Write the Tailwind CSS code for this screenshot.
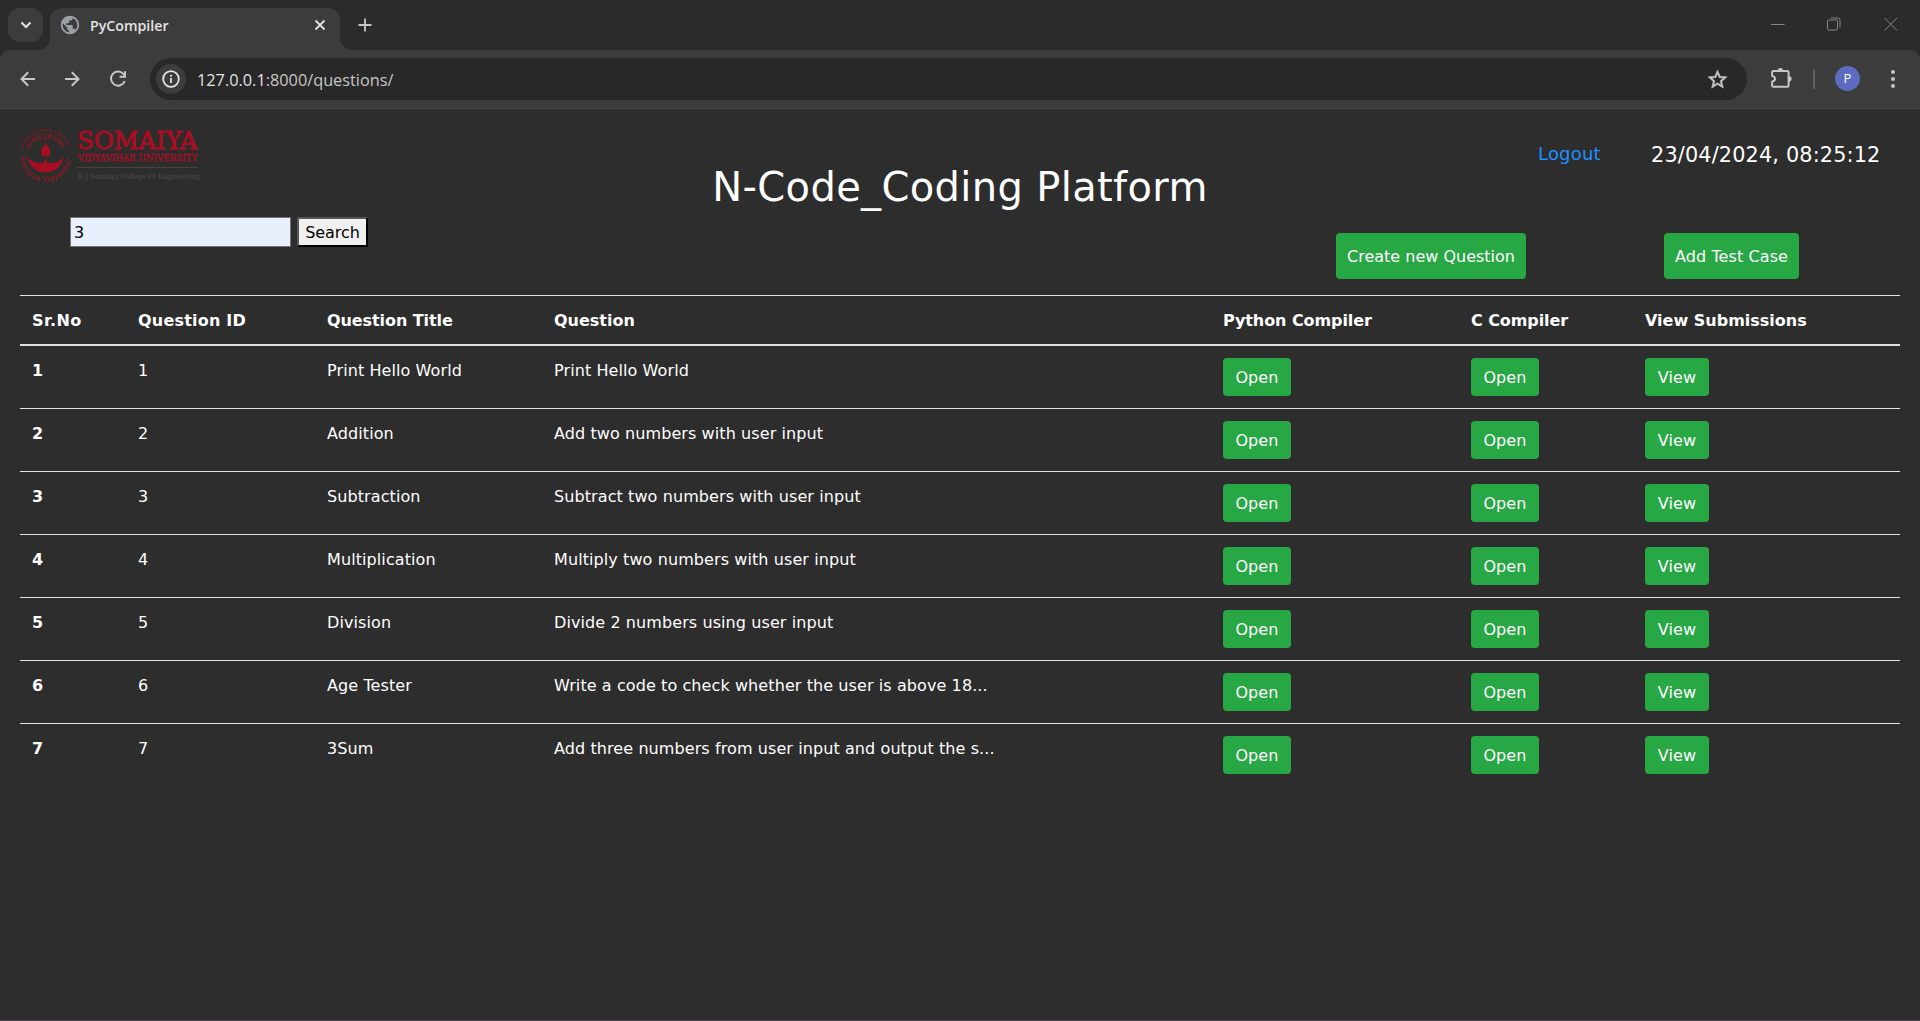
<!DOCTYPE html>
<html lang="en">
<head>
<meta charset="utf-8">
<title>PyCompiler</title>
<script src="https://cdn.jsdelivr.net/npm/@tailwindcss/browser@4"></script>
</head>
<body class="w-[1920px] h-[1021px] overflow-hidden bg-[#2d2d2d] flex flex-col text-white font-['DejaVu_Sans',sans-serif] text-base">

<!-- Tab strip -->
<div class="h-[50px] shrink-0 bg-[#2b2b2b] flex items-start font-['Open_Sans',sans-serif]">
  <button class="ml-2 mt-2 w-[35px] h-[34px] rounded-xl bg-[#3c3c3c] flex items-center justify-center">
    <svg class="w-3 h-3" viewBox="0 0 12 12" fill="none" stroke="#e3e3e3" stroke-width="2"><path d="M1.5 3.5 6 8l4.5-4.5"/></svg>
  </button>
  <div class="relative ml-[7px] mt-2 w-[290px] h-[42px] rounded-t-xl bg-[#3c3c3c] flex items-center pb-[1px]">
    <svg class="absolute -left-3 bottom-0 w-3 h-3" viewBox="0 0 12 12" fill="#3c3c3c"><path d="M12 0v12H0A12 12 0 0 0 12 0z"/></svg>
    <svg class="absolute -right-3 bottom-0 w-3 h-3" viewBox="0 0 12 12" fill="#3c3c3c"><path d="M0 0v12h12A12 12 0 0 1 0 0z"/></svg>
    <svg class="ml-[9px] mb-[7px] w-[22px] h-[22px]" viewBox="0 0 24 24" fill="#9aa0a6"><path d="M12 2C6.48 2 2 6.48 2 12s4.48 10 10 10 10-4.48 10-10S17.52 2 12 2zm-1 17.93c-3.95-.49-7-3.85-7-7.93 0-.62.08-1.21.21-1.79L9 15v1c0 1.1.9 2 2 2v1.93zm6.9-2.54c-.26-.81-1-1.39-1.9-1.39h-1v-3c0-.55-.45-1-1-1H8v-2h2c.55 0 1-.45 1-1V7h2c1.1 0 2-.9 2-2v-.41c2.93 1.19 5 4.06 5 7.41 0 2.08-.8 3.97-2.1 5.39z"/></svg>
    <span class="ml-[9px] mb-[6px] text-[14.2px] leading-5 font-semibold text-[#e3e3e3]">PyCompiler</span>
    <svg class="ml-auto mr-[14px] mb-[7px] w-3 h-3" viewBox="0 0 12 12" fill="none" stroke="#e3e3e3" stroke-width="1.8"><path d="m1.5 1.5 9 9m0-9-9 9"/></svg>
  </div>
  <svg class="ml-[18px] mt-[18px] w-[14px] h-[14px]" viewBox="0 0 14 14" fill="none" stroke="#c7c7c7" stroke-width="1.8"><path d="M7 .5v13M.5 7h13"/></svg>
  <div class="ml-auto mt-[17px] mr-[22px] flex items-center">
    <svg class="w-[14px] h-[14px]" viewBox="0 0 14 14" stroke="#858585"><path d="M0 7.5h13.5"/></svg>
    <svg class="ml-[42px] w-[14px] h-[14px]" viewBox="0 0 14 14" fill="none" stroke="#858585"><rect x=".5" y="3" width="10" height="10" rx="1"/><path d="M3.5 1h7.500a2 2 0 0 1 2 2v7.500"/></svg>
    <svg class="ml-[43px] w-[14px] h-[14px]" viewBox="0 0 14 14" stroke="#858585"><path d="m.5 1 12.500 12.500m0-12.500L.5 13.500"/></svg>
  </div>
</div>

<!-- Toolbar -->
<div class="h-[59px] shrink-0 bg-[#2b2b2b]">
  <div class="h-full rounded-t-[10px] bg-[#3c3c3c] border-b border-[#484848] flex items-start text-[#c7c7c7] font-['Open_Sans',sans-serif]">
    <svg class="ml-[20px] mt-[21px] w-[15px] h-4" viewBox="0 0 15 16" fill="none" stroke="currentColor" stroke-width="2"><path d="M15 8H1.500M8.200 1.200 1.500 8l6.700 6.800"/></svg>
    <svg class="ml-[30px] mt-[21px] w-[15px] h-4" viewBox="0 0 15 16" fill="none" stroke="currentColor" stroke-width="2"><path d="M0 8h13.500M6.800 1.200 13.500 8l-6.700 6.800"/></svg>
    <svg class="ml-[27px] mt-[18px] w-[22px] h-[22px]" viewBox="0 0 24 24" fill="none" stroke="currentColor" stroke-width="2.100"><path d="M19.300 14.300a7.700 7.700 0 1 1-1.500-7.900l1.600 1.800"/><path d="M19.700 3.600v6h-6"/></svg>
    <div class="ml-[21px] mt-2 w-[1597px] h-[42px] rounded-full bg-[#282828] flex items-center">
      <span class="ml-[6px] w-[30px] h-[30px] rounded-full bg-[#3c3c3c] flex items-center justify-center">
        <svg class="w-[18px] h-[18px]" viewBox="0 0 18 18" fill="none" stroke="#e3e3e3" stroke-width="1.8"><circle cx="9" cy="9" r="7.800"/><path d="M9 8v5M9 4.800v1.900"/></svg>
      </span>
      <span class="ml-[11px] pt-px text-[16.3px] leading-6"><span class="text-[#e3e3e3]">127.0.0.1</span>:8000/questions/</span>
      <svg class="ml-auto mr-[18px] w-[23px] h-[23px]" viewBox="0 0 24 24" fill="currentColor"><path d="m22 9.24-7.19-.62L12 2 9.19 8.63 2 9.24l5.46 4.73L5.82 21 12 17.27 18.18 21l-1.63-7.03zM12 15.4l-3.76 2.27 1-4.28-3.32-2.88 4.38-.38L12 6.1l1.71 4.04 4.38.38-3.32 2.88 1 4.28z" stroke="currentColor" stroke-width=".5"/></svg>
    </div>
    <svg class="ml-[24px] mt-[17px] w-[22px] h-[22px]" viewBox="0 0 22 22"><path d="M2.300 3.900h14a1.300 1.300 0 0 1 1.300 1.300v13.200a1.300 1.300 0 0 1-1.300 1.300H2.300a1.200 1.200 0 0 1-1.200-1.200v-3.700c1.800-.5 2.900-1.500 2.900-3s-1.100-2.600-2.900-3.100V5.100a1.200 1.200 0 0 1 1.200-1.200z" fill="none" stroke="currentColor" stroke-width="2"/><path d="M6.800 3.600a2.600 2.600 0 0 1 5.200 0zM17.800 9a2.800 2.800 0 0 1 0 5.600z" fill="currentColor"/></svg>
    <span class="ml-5 mt-[19px] w-[2px] h-5 bg-[#5e5e5e]"></span>
    <span class="ml-5 mt-4 w-[25px] h-[25px] rounded-full bg-[#5c6bc0] text-white flex items-center justify-center text-[13px] leading-none">P</span>
    <svg class="ml-[30px] mt-5 w-[6px] h-[18px]" viewBox="0 0 6 18" fill="currentColor"><circle cx="3" cy="2" r="2"/><circle cx="3" cy="9" r="2"/><circle cx="3" cy="16" r="2"/></svg>
  </div>
</div>

<!-- Page header -->
<header class="h-[186px] shrink-0 grid grid-cols-[640px_640px_640px]">
  <div class="pt-[11px]">
    <svg class="ml-[10px] w-[200px] h-[70px] overflow-visible" viewBox="0 0 200 70" fill="#a80d22" font-family="'DejaVu Serif',serif">
      <defs>
        <path id="ringTop" d="M12 28.500A24.500 24.500 0 0 1 59 28.500"/>
        <path id="ringInner" d="M19 30A17.500 17.500 0 0 1 52 30"/>
        <path id="ringBottom" d="M10 36A25.500 25.500 0 0 0 61 36"/>
      </defs>
      <text font-size="3.800" font-family="'DejaVu Sans',sans-serif"><textPath href="#ringTop" textLength="60">Knowledge Alone Liberates</textPath></text>
      <text font-size="6.500" font-family="'Noto Sans',sans-serif"><textPath href="#ringInner" textLength="40">ज्ञानादेव तु कैवल्यम्</textPath></text>
      <text font-size="7" font-family="'DejaVu Sans',sans-serif"><textPath href="#ringBottom" startOffset="1" textLength="76">Somaiya Vidyavihar</textPath></text>
      <path d="M17.500 37c4 5 10 7 15 6 1.600-.4 2.600-1.800 3-5 .4 3.200 1.400 4.600 3 5 5 1 11-1 15-6-1.500 9-8.500 15.500-18 15.500S19 46 17.500 37z"/>
      <path d="M35.800 21.500c.4 4.500 4.500 6.500 4.500 10.500 0 3-2 4.800-3.800 5.300L35.500 34l-1 3.300c-1.800-.5-3.500-2.300-3.500-5.300 0-4 4.600-6 4.800-10.500z"/>
      <text x="67.300" y="28.700" font-size="23.500" textLength="120" lengthAdjust="spacingAndGlyphs" stroke="#a80d22" stroke-width=".9">SOMAIYA</text>
      <text x="67.700" y="40.700" font-size="9.200" textLength="119.500" lengthAdjust="spacingAndGlyphs" stroke="#a80d22" stroke-width=".35">VIDYAVIHAR UNIVERSITY</text>
      <path d="M67.700 47h119.500v1H67.700z" fill="#444"/>
      <text x="67.700" y="59.300" font-size="7.500" font-weight="bold" fill="#434343" textLength="122" lengthAdjust="spacingAndGlyphs">K J Somaiya College Of Engineering</text>
    </svg>
    <form class="ml-[70px] mt-[27px] flex gap-[6px] text-black">
      <input class="w-[221px] h-[30px] bg-[#e8f0fe] border border-[#767676] pl-[3px] pt-px leading-6 outline-none" value="3">
      <button type="button" class="w-[71px] h-[30px] bg-[#f0f0f0] border-2 border-t-[#555] border-l-[#555] border-r-black border-b-black pt-px leading-[25px] tracking-[-0.05px] flex items-center justify-center">Search</button>
    </form>
  </div>
  <h1 class="pt-[54px] text-[40px] leading-[48px] tracking-[0.35px] text-center whitespace-nowrap">N-Code_Coding Platform</h1>
  <div class="pt-[31px]">
    <div class="flex items-start h-[30px]">
      <a class="ml-[258px] w-[113px] text-[18px] leading-[27px] tracking-[0.2px] text-[#1e90ff]">Logout</a>
      <span class="text-[20.8px] leading-[30px] tracking-[0.15px] whitespace-nowrap">23/04/2024, 08:25:12</span>
    </div>
    <div class="mt-[63px] flex">
      <button class="ml-[56px] w-[190px] h-[46px] pt-px rounded bg-[#28a745] whitespace-nowrap">Create new Question</button>
      <button class="ml-[138px] w-[135px] h-[46px] pt-px rounded bg-[#28a745] tracking-[0.1px] whitespace-nowrap">Add Test Case</button>
    </div>
  </div>
</header>

<!-- Question list -->
<main class="mx-5 border-t border-[#dee2e6]">
  <div class="grid grid-cols-[106px_189px_227px_669px_248px_174px_267px] h-[50px] pt-3 border-b-2 border-[#dee2e6] leading-[26px] font-bold *:pl-3">
    <div class="tracking-[0.4px]">Sr.No</div><div class="tracking-[0.2px]">Question ID</div><div class="tracking-[-0.08px]">Question Title</div><div>Question</div><div class="tracking-[-0.08px]">Python Compiler</div><div class="tracking-[-0.08px]">C Compiler</div><div>View Submissions</div>
  </div>
  <div id="rows" class="leading-[26px] tracking-[0.09px]"></div>
</main>
<footer class="mt-auto h-px bg-[#4a444a]"></footer>

<script>
  const questions = [
    ["Print Hello World", "Print Hello World"],
    ["Addition", "Add two numbers with user input"],
    ["Subtraction", "Subtract two numbers with user input"],
    ["Multiplication", "Multiply two numbers with user input"],
    ["Division", "Divide 2 numbers using user input"],
    ["Age Tester", "Write a code to check whether the user is above 18..."],
    ["3Sum", "Add three numbers from user input and output the s..."]
  ];
  document.getElementById("rows").innerHTML = questions.map(([title, text], i) => `
    <div class="grid grid-cols-[106px_189px_227px_669px_248px_174px_267px] h-[63px] pt-3 border-b border-[#dee2e6] last:border-b-0 *:pl-3">
      <div class="font-bold">${i + 1}</div><div>${i + 1}</div><div>${title}</div><div>${text}</div>
      <div><button class="block w-[68px] h-[38px] pt-px rounded bg-[#28a745]">Open</button></div>
      <div><button class="block w-[68px] h-[38px] pt-px rounded bg-[#28a745]">Open</button></div>
      <div><button class="block w-[64px] h-[38px] pt-px rounded bg-[#28a745]">View</button></div>
    </div>`).join("");
</script>
</body>
</html>
